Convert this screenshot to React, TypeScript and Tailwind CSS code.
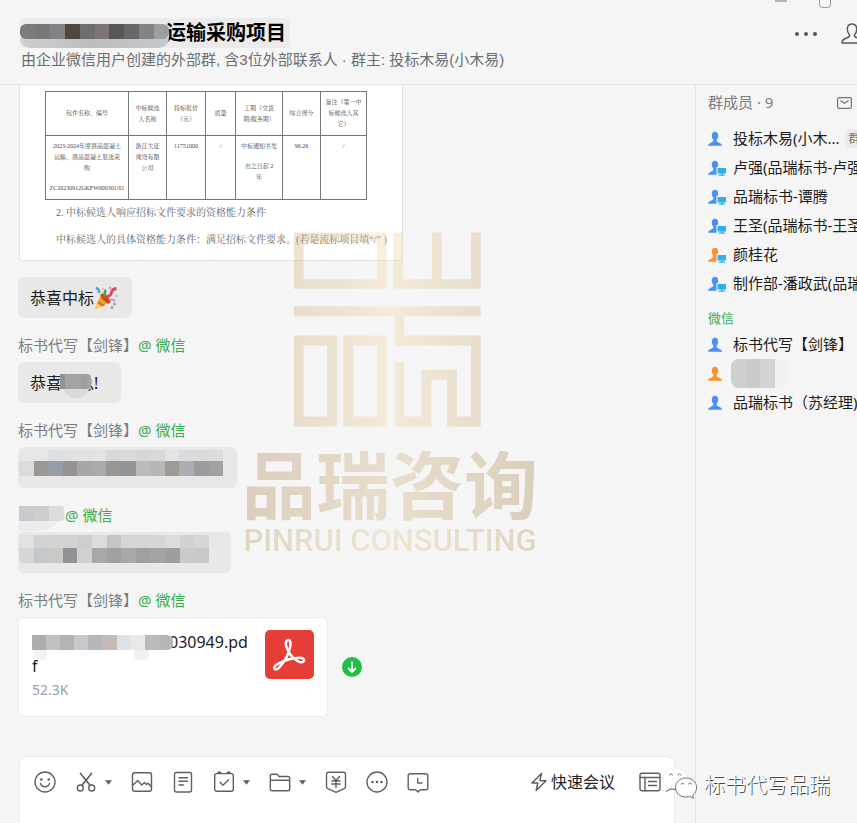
import React from "react";

const sans =
  "font-['Noto_Sans','Noto_Sans_CJK_SC',sans-serif]";

/* Rows of pixelated tiles that hide private details. */
function Mosaic({ cells, className }: { cells: string[]; className: string }) {
  return (
    <div aria-hidden="true" className={`flex overflow-hidden ${className}`}>
      {cells.map((c, i) => (
        <div key={i} className={`min-w-0 flex-1 ${c}`} />
      ))}
    </div>
  );
}

function Sender() {
  return (
    <div className="mt-[15px] mb-[5px] flex h-6 items-center text-[15px] whitespace-nowrap text-[#7a7d82]">
      <span>标书代写【剑锋】</span>
      <Wechat />
    </div>
  );
}

function Wechat() {
  return <span className="text-[15px] text-[#35ad50]">@ 微信</span>;
}

function Popper() {
  return (
    <svg viewBox="0 0 24 24" className="h-6 w-6 shrink-0" aria-label="庆祝" role="img">
      <path d="M1 23 7 8.500q5 2 8 8.500Z" fill="#f6a821" />
      <path d="M1 23 4 16l5 4Z" fill="#fbc846" />
      <path d="M4.500 15 11 19.500 8 20.500 3.600 17Z" fill="#dc6a2a" />
      <ellipse cx="11.500" cy="12.500" rx="2.800" ry="6.500" transform="rotate(-45 11.500 12.500)" fill="#c4501f" />
      <path d="M12 11q5-1 5.500-4.500t5-4" fill="none" stroke="#d84859" strokeWidth="2.800" />
      <path d="M11 10q-1-4 1-6" fill="none" stroke="#41a857" strokeWidth="2.600" />
      <path d="M2 2q4 1 3 5" fill="none" stroke="#4b9fd8" strokeWidth="2.400" />
      <path d="M15 14q4-1 6 1" fill="none" stroke="#e77fb0" strokeWidth="1.800" />
      <circle cx="20.500" cy="18" r="1.500" fill="#66b9e6" />
      <circle cx="16" cy="2" r="1.300" fill="#e48cc2" />
      <circle cx="9" cy="3" r="1" fill="#f3b13d" />
      <circle cx="18" cy="21.500" r="1.200" fill="#e8647c" />
      <circle cx="22.500" cy="10" r="1.200" fill="#8dc9ec" />
    </svg>
  );
}

function Person({ orange, desktop }: { orange?: boolean; desktop?: boolean }) {
  return (
    <svg viewBox="0 0 20 16" className="h-4 w-5 shrink-0" aria-hidden="true">
      <path
        d="M7 .8C4.900.8 3.800 2.300 3.800 4.500c0 1.700.6 2.900 1.400 4 .4.700.3 1.600-.5 2.200L1.500 12.400C.4 13 0 13.600 0 14.800h14c0-1.200-.4-1.800-1.500-2.400L9.300 10.700c-.8-.6-.9-1.500-.5-2.200.8-1.100 1.400-2.300 1.400-4C10.200 2.300 9.100.8 7 .8Z"
        fill={orange ? "#fb922e" : "#4a91f4"}
      />
      {desktop && (
        <g>
          <path d="M8.500 7H20v9H8.500Z" fill="#f5f5f5" />
          <path d="M9.500 8h8.500v5.400H9.500ZM13 13.400h1.600V14.600H17V15.700H10.700V14.600H13Z" fill="#2db1ea" />
        </g>
      )}
    </svg>
  );
}

function Member({
  name,
  orange,
  desktop,
  tag,
}: {
  name: React.ReactNode;
  orange?: boolean;
  desktop?: boolean;
  tag?: string;
}) {
  return (
    <li className="flex h-[29px] items-center gap-[5px] text-[15px] whitespace-nowrap text-[#1c1c1c]">
      <Person orange={orange} desktop={desktop} />
      <span>{name}</span>
      {tag && <span className="rounded-sm bg-[#ebebec] px-1 text-[12px] leading-[19px] text-[#777]">{tag}</span>}
    </li>
  );
}

function Tool({ label, caret, children }: { label: string; caret?: boolean; children: React.ReactNode }) {
  return (
    <button type="button" aria-label={label} className="flex shrink-0 items-center gap-2 text-[#5c6067]">
      <svg
        viewBox="0 0 22 22"
        className="h-[22px] w-[22px]"
        fill="none"
        stroke="currentColor"
        strokeWidth="1.400"
        strokeLinecap="round"
        strokeLinejoin="round"
      >
        {children}
      </svg>
      {caret && (
        <svg viewBox="0 0 7 5" className="h-[5px] w-[7px]" fill="currentColor">
          <path d="M0 .3h7L3.500 4.800Z" />
        </svg>
      )}
    </button>
  );
}

function Toolbar() {
  return (
    <div className="flex items-center justify-between pt-[14px] pr-[13px] pl-[14px]">
      <div className="flex items-center gap-[19px]">
        <Tool label="表情">
          <circle cx="11" cy="11" r="10" />
          <circle cx="7.300" cy="8.500" r=".6" fill="currentColor" />
          <circle cx="14.700" cy="8.500" r=".6" fill="currentColor" />
          <path d="M6.500 12.500q1 3.200 4.500 3.200t4.500-3.200" />
        </Tool>
        <Tool label="截图" caret>
          <path d="M5.500 2.500 15 14.300M16.500 2.500 7 14.300" strokeWidth="1.700" />
          <circle cx="5.300" cy="17" r="3" />
          <circle cx="16.700" cy="17" r="3" />
        </Tool>
        <Tool label="图片">
          <rect x="1.500" y="1.700" width="19" height="18.600" rx="2.200" />
          <path d="m1.500 14.500 5.200-5 4 4.500 2.800-2.500 2 2 1.500-1.300 3.500 3.600" />
        </Tool>
        <Tool label="文档">
          <rect x="2.500" y="1.500" width="17" height="19.500" rx="2" />
          <path d="M7 6.800h8.500M7 10.300h8.500M7 14h4.500" />
        </Tool>
        <Tool label="日程" caret>
          <rect x="1.700" y="2.600" width="18.600" height="17.700" rx="2" />
          <path d="M5.300 1.600h2.200M14.500 1.600h2.200" strokeWidth="2" />
          <path d="m7 11.300 3 3 5.500-5.500" />
        </Tool>
        <Tool label="文件" caret>
          <path d="M1.300 5q0-1.800 1.800-1.800h4.500q.7 0 1.200.7l1.300 1.600h8.800q1.800 0 1.800 1.800V18q0 1.800-1.800 1.800H3.100q-1.800 0-1.800-1.800ZM1.300 9.200h19.400" />
        </Tool>
        <Tool label="红包">
          <path d="M1.500 3.200q0-1.900 1.900-1.900h15.200q1.900 0 1.900 1.900v12.500q0 1.200-1.300 1.900L11 21.300l-8.200-3.700q-1.300-.7-1.300-1.900Z" />
          <path d="m7.500 5.500 3.500 4.300 3.500-4.300M6.800 10h8.400M6.800 13h8.400M11 10v6.500" />
        </Tool>
        <Tool label="更多">
          <circle cx="11" cy="11" r="10" />
          <circle cx="6.500" cy="11" r=".6" fill="currentColor" />
          <circle cx="11" cy="11" r=".6" fill="currentColor" />
          <circle cx="15.500" cy="11" r=".6" fill="currentColor" />
        </Tool>
        <Tool label="聊天记录">
          <path d="M3.200 2.700h15.600q2 0 2 2v12q0 2-2 2h-5.300L11 20.900l-2.500-2.200H3.200q-2 0-2-2v-12q0-2 2-2Z" />
          <path d="M10.700 7.500V12h4.200" />
        </Tool>
      </div>
      <div className="flex items-center gap-6">
        <button type="button" className="flex items-center gap-1 text-[16px] leading-[22px] whitespace-nowrap text-[#222]">
          <svg viewBox="0 0 16 20" className="h-5 w-4" fill="none" stroke="#5c6067" strokeWidth="1.500" strokeLinejoin="round">
            <path d="M10.500 1.500 1 11h5.800L5.200 18.500 15 8.700H9Z" />
          </svg>
          <span>快速会议</span>
        </button>
        <Tool label="侧边栏">
          <rect x="1" y="2.200" width="20" height="17.600" rx="2" />
          <path d="M1 6.500h20M6 6.500v13M9.500 10.500h8M9.500 14.500h8" />
        </Tool>
      </div>
    </div>
  );
}

const th = "border border-[#777] p-px text-center font-normal leading-[11px]";
const td = "border border-[#777] px-px pt-[5px] text-center align-top leading-[11px]";

function DocumentPreview() {
  return (
    <div className="w-[384px] rounded-b border border-t-0 border-[#e2e2e2] bg-white pt-[6px] pb-[11px] font-['Liberation_Serif','Noto_Serif_CJK_SC','Noto_Sans_CJK_SC',serif] text-[#666]">
      <table className="ml-[25px] w-[321px] table-fixed border-collapse text-[6px] text-[#444]">
        <colgroup>
          <col className="w-[83px]" />
          <col className="w-[38px]" />
          <col className="w-[39px]" />
          <col className="w-[30px]" />
          <col className="w-[47px]" />
          <col className="w-[38px]" />
          <col className="w-[46px]" />
        </colgroup>
        <thead>
          <tr className="h-11">
            <th className={th}>包件名称、编号</th>
            <th className={th}>中标候选<br />人名称</th>
            <th className={th}>投标报价<br />（元）</th>
            <th className={th}>质量</th>
            <th className={th}>工期（交货<br />期/服务期）</th>
            <th className={th}>综合得分</th>
            <th className={th}>备注（第一中<br />标候选人其<br />它）</th>
          </tr>
        </thead>
        <tbody>
          <tr className="h-16">
            <td className={td}>
              2023-2024年度商品混凝土<br />运输、商品混凝土泵送采<br />购
              <div className="pt-[9px]">ZC20230912GKFW000301/01</div>
            </td>
            <td className={td}>浙江大征<br />建设有限<br />公司</td>
            <td className={td}>11751000</td>
            <td className={td}>/</td>
            <td className={td}>
              中标通知书发
              <div className="pt-[9px]">出之日起 2<br />年</div>
            </td>
            <td className={td}>96.26</td>
            <td className={td}>/</td>
          </tr>
        </tbody>
      </table>
      <p className="mt-1 ml-[36px] text-[10px] leading-[18px] whitespace-nowrap">
        2. 中标候选人响应招标文件要求的资格能力条件
      </p>
      <p className="mt-[9px] ml-[36px] text-[10px] leading-[18px] whitespace-nowrap">
        中标候选人的具体资格能力条件：满足招标文件要求。(若是流标项目填“/” )
      </p>
    </div>
  );
}

/* Translucent company brand laid over the conversation. */
function BrandOverlay() {
  return (
    <div className="pointer-events-none absolute top-[147px] left-[243px] flex w-[294px] flex-col items-center opacity-40">
      <svg viewBox="192 38 561 582" className="ml-[51px] h-[195px] w-[187px] self-start" aria-hidden="true">
        <defs>
          <linearGradient id="gold" gradientUnits="userSpaceOnUse" x1="192" x2="753" y1="0" y2="0">
            <stop offset="0" stopColor="#d7b88c" />
            <stop offset=".5" stopColor="#f2dbb0" />
            <stop offset=".75" stopColor="#e2cb9f" />
            <stop offset="1" stopColor="#d7b88c" />
          </linearGradient>
        </defs>
        <path
          fill="url(#gold)"
          fillRule="evenodd"
          d="M192 38H470V207H192ZM221 67V178H441V67ZM490 38H519V178H606V38H635V178H723V38H752V207H490ZM192 259H752V289H523V347H752V620H651V480H604V620H494V426H523V590H574V450H681V590H723V377H494V289H192ZM192 347H321V620H192ZM221 377V590H291V377ZM340 347H470V620H340ZM371 377V590H441V377Z"
        />
      </svg>
      <div className="mt-6 bg-linear-to-r from-[#b39468] via-[#d8bd90] to-[#b39468] bg-clip-text font-['Roboto','Noto_Sans_CJK_SC',sans-serif] text-[74px] leading-[73px] font-bold whitespace-nowrap text-transparent">
        品瑞咨询
      </div>
      <div className="bg-linear-to-r from-[#c4a377] via-[#e8cf9f] to-[#c4a377] bg-clip-text font-['Roboto',sans-serif] text-[31px] leading-[34px] font-medium whitespace-nowrap text-transparent">
        PINRUI CONSULTING
      </div>
    </div>
  );
}

function FileCard() {
  return (
    <div className="flex items-center">
      <div className="flex h-[100px] w-[310px] justify-between rounded-md border border-[#ebebeb] bg-white px-[13px] pt-[12px]">
        <div className="text-[16px] leading-[23px] text-[#1c1c1c]">
          <div className="flex h-[25px] items-center">
            <div className="relative z-10 -mr-[4px] h-[15px]">
              <Mosaic
                className="h-[15px] w-[141px] rounded-r-md"
                cells={["bg-[#b0acab]", "bg-[#bdc1c5]", "bg-[#b6b2b0]", "bg-[#c5c9cc]", "bg-[#b5b7ba]", "bg-[#c5bab5]", "bg-[#dce2e9]", "bg-[#e9e9e9]", "bg-[#bcbab8]", "bg-[#b8b6b5]"]}
              />
              <div className="absolute top-[15px] left-0 h-[10px] w-[15px] rounded-bl-full bg-[#f3f3f3]" />
              <div className="absolute top-[15px] left-[102px] h-[10px] w-[15px] rounded-b-sm bg-[#f1f1ef]" />
            </div>
            <span>030949.pd</span>
          </div>
          <div>f</div>
          <div className="text-[14px] text-[#95a0ab]">52.3K</div>
        </div>
        <svg viewBox="0 0 49 49" className="h-[49px] w-[49px] shrink-0" role="img" aria-label="PDF">
          <rect width="49" height="49" rx="5" fill="#e63e36" />
          <path
            d="M23.300 10c-2.600.300-3 3.600-1.900 6.800 1.800 5.200 5.400 10.800 11.300 14.300 2.800 1.600 5.700 1.500 6.300-.300.700-2.100-1.700-3.100-4.400-3-8 .200-14.400 2.400-20.800 5.600-3 1.500-5 3.300-4.300 5.200.6 1.600 3 .900 4.800-1.100 5.700-6.400 9.700-13.500 11-21.200.400-2.700.3-6.500-2-6.300Z"
            fill="none"
            stroke="#fff"
            strokeWidth="2.500"
            strokeLinejoin="round"
          />
        </svg>
      </div>
      <button type="button" aria-label="下载" className="ml-[14px] flex h-5 w-5 items-center justify-center rounded-full bg-[#20bf45]">
        <svg viewBox="0 0 14 14" className="h-[14px] w-[14px]" fill="none" stroke="#fff" strokeWidth="1.800">
          <path d="M7 1.500v10.500M3 8l4 4 4-4" />
        </svg>
      </button>
    </div>
  );
}

const bubble = "relative flex h-[41px] items-center overflow-hidden rounded-md bg-[#e8e8e8] text-[16px] text-[#1c1c1c] whitespace-nowrap";

function Chat() {
  return (
    <main className="relative flex min-w-0 flex-1 flex-col border-r border-[#e4e4e4]">
      <div className="min-h-0 flex-1 overflow-hidden pl-[18px]">
        <div className="pl-px">
          <DocumentPreview />
        </div>
        <div className={`${bubble} mt-4 w-[114px] pl-3`}>
          <span>恭喜中标</span>
          <Popper />
        </div>

        <Sender />
        <div className={`${bubble} w-[103px] pl-3`}>
          <span>恭喜</span>
          <span className="ml-4">总!</span>
          <div className="absolute top-[18px] left-[45px] h-[18px] w-[27px] rounded-b-full bg-[#d9dadb]" />
          <Mosaic className="absolute top-3 left-[42px] h-[15px] w-[31px] rounded-r" cells={["bg-[#929292]", "bg-[#a3a3a3]", "bg-[#a3a3a3]", "bg-[#a3a3a3]", "bg-[#9f9f9f]", "bg-[#a3a3a3]"]} />
        </div>

        <Sender />
        <div className={`${bubble} w-[219px] flex-col items-start pl-px`}>
          <Mosaic className="mt-[3px] h-[11px] w-[204px]" cells={["bg-[#e6e6e6]", "bg-[#e6e6e6]", "bg-[#dedfe1]", "bg-[#e1e1e1]", "bg-[#e1e1e1]", "bg-[#e3e3e3]", "bg-[#d8d8d8]", "bg-[#dadada]", "bg-[#d6d6d6]", "bg-[#d8d8d8]", "bg-[#e3e3e3]", "bg-[#dadbde]", "bg-[#dbdbdb]", "bg-[#dcdcdc]"]} />
          <Mosaic className="h-[15px] w-[204px]" cells={["bg-[#dcdbd9]", "bg-[#9e9791]", "bg-[#989ea6]", "bg-[#979394]", "bg-[#a5a8a7]", "bg-[#abaaa8]", "bg-[#999693]", "bg-[#919699]", "bg-[#bbbbbb]", "bg-[#b7b7b7]", "bg-[#9f9995]", "bg-[#aaaeb3]", "bg-[#9b9ba0]", "bg-[#a3a19f]"]} />
        </div>

        <div className="mt-[15px] mb-[5px] flex h-6 items-center gap-px pl-px">
          <div className="relative h-[18px] w-[45px]">
            <div className="absolute top-0 left-0 h-[25px] w-[45px] rounded-br-full bg-[#ececed]" />
            <Mosaic className="relative h-[15px] w-[45px] rounded-r" cells={["bg-[#c8cad0]", "bg-[#cccdce]", "bg-[#dadbdd]"]} />
          </div>
          <Wechat />
        </div>
        <div className={`${bubble} w-[213px] flex-col items-start pl-px`}>
          <Mosaic className="mt-[3px] h-[13px] w-[190px]" cells={["bg-[#e2e2e2]", "bg-[#d2d2d2]", "bg-[#d3d3d3]", "bg-[#d3d3d4]", "bg-[#cecece]", "bg-[#dbdbdc]", "bg-[#c5c5c3]", "bg-[#d4d5d7]", "bg-[#d5d5d5]", "bg-[#d5d6d8]", "bg-[#dcdcdc]", "bg-[#d1d1d1]", "bg-[#d5d6d8]"]} />
          <Mosaic className="h-[15px] w-[190px] rounded-bl" cells={["bg-[#d9d5d6]", "bg-[#c3c8ca]", "bg-[#cac9c5]", "bg-[#919296]", "bg-[#d0d0d0]", "bg-[#aaa8a6]", "bg-[#a0a0a0]", "bg-[#a8a8a9]", "bg-[#a0a0a1]", "bg-[#a4a4a3]", "bg-[#9d9ea0]", "bg-[#c9cbca]", "bg-[#c8c8c9]"]} />
        </div>

        <Sender />
        <FileCard />
      </div>

      <div className="mr-5 ml-[19px] h-[67px] shrink-0 rounded-t-lg border border-b-0 border-[#ebebeb] bg-white">
        <Toolbar />
      </div>
      <BrandOverlay />
    </main>
  );
}

function Members() {
  return (
    <aside className="w-[161px] shrink-0 overflow-hidden pl-3">
      <div className="mb-1 flex h-[35px] items-center justify-between pr-[5px]">
        <h2 className="text-[15px] whitespace-nowrap text-[#7a7d82]">群成员 · 9</h2>
        <button type="button" aria-label="邀请">
          <svg viewBox="0 0 15 12" className="h-3 w-[15px]" fill="none" stroke="#70747a" strokeWidth="1.200">
            <rect x=".6" y=".6" width="13.800" height="10.800" rx="1.500" />
            <path d="m3.500 3.500 4 2.800 4-2.800" />
          </svg>
        </button>
      </div>
      <ul>
        <Member name="投标木易(小木..." tag="群主" />
        <Member name="卢强(品瑞标书-卢强)" desktop />
        <Member name="品瑞标书-谭腾" desktop />
        <Member name="王圣(品瑞标书-王圣)" desktop />
        <Member name="颜桂花" orange desktop />
        <Member name="制作部-潘政武(品瑞" desktop />
      </ul>
      <h3 className="h-8 pt-[9px] text-[13px] leading-[22px] text-[#35ad50]">微信</h3>
      <ul>
        <Member name="标书代写【剑锋】" />
        <Member
          orange
          name={
            <Mosaic
              className="-ml-[2px] h-[29px] w-[58px] rounded-lg"
              cells={["bg-[#cfcfd0]", "bg-[#cacacb]", "bg-[#d1d3d4]", "bg-[#f1f1f2]"]}
            />
          }
        />
        <Member name="品瑞标书（苏经理)1" />
      </ul>
    </aside>
  );
}

function Header() {
  return (
    <header className="flex h-[85px] shrink-0 justify-between overflow-hidden border-b border-[#e4e4e4]">
      <div className="pt-[18px] pl-5">
        <h1 className="flex h-[30px] w-fit items-center rounded-sm bg-[#ebebec] pr-1 text-[20px] font-bold whitespace-nowrap text-black">
          <div className="relative z-10 -mr-[3px] h-full w-[149px]">
            <div className="absolute top-5 left-0 h-[10px] w-full rounded-b-full bg-linear-to-r from-[#cfcfcf] via-[#bdbdbd] to-[#c6c8cb]" />
            <Mosaic
              className="absolute top-[6px] left-0 h-[15px] w-full rounded-l-md rounded-r-md"
              cells={["bg-[#7d7b77]", "bg-[#7a7875]", "bg-[#7f8286]", "bg-[#4e4742]", "bg-[#6b6e70]", "bg-[#7b7673]", "bg-[#575757]", "bg-[#66676b]", "bg-[#808487]", "bg-[#9b9d9f]"]}
            />
          </div>
          <span>运输采购项目</span>
        </h1>
        <p className="pl-px font-['Liberation_Sans','Noto_Sans_CJK_SC',sans-serif] text-[15px] leading-6 whitespace-nowrap text-[#6b6e73]">
          由企业微信用户创建的外部群, 含3位外部联系人 · 群主: 投标木易(小木易)
        </p>
      </div>
      <div className="flex flex-col items-end">
        <div className="flex gap-8 pr-[26px]">
          <button type="button" aria-label="最小化" className="h-[2px] w-3 bg-[#b5b5b5]" />
          <button type="button" aria-label="最大化" className="h-2 w-3 rounded-b-sm border border-t-0 border-[#a0a0a0]" />
        </div>
        <div className="mt-[15px] -mr-[6px] flex items-center gap-6">
          <button type="button" aria-label="更多" className="flex gap-[5px]">
            <i className="h-1 w-1 rounded-full bg-[#55585e]" />
            <i className="h-1 w-1 rounded-full bg-[#55585e]" />
            <i className="h-1 w-1 rounded-full bg-[#55585e]" />
          </button>
          <button type="button" aria-label="添加成员">
            <svg viewBox="0 0 22 21" className="h-[21px] w-[22px]" fill="none" stroke="#55585e" strokeWidth="1.400" strokeLinejoin="round">
              <path d="M11 1C8 1 6.300 3.300 6.300 6.300c0 2.300.9 4 2 5.400.6.800.4 1.800-.6 2.300l-4.200 2C2 16.700 1 18 1 20h20c0-2-1-3.300-2.500-4l-4.200-2c-1-.5-1.200-1.500-.6-2.300 1.100-1.400 2-3.100 2-5.400C15.700 3.300 14 1 11 1Z" />
            </svg>
          </button>
        </div>
      </div>
    </header>
  );
}

function AccountOverlay() {
  return (
    <div className="pointer-events-none absolute right-[27px] bottom-6 flex items-center gap-[6px]">
      <svg viewBox="0 0 36 32" className="h-8 w-9" aria-hidden="true">
        <path d="M13 1C6 1 .5 5.500.5 11.500c0 3.500 2 6.500 5 8.300L4.500 24l4.500-2.500q2 .6 4 .6c7 0 12.500-4.600 12.500-10.600S20 1 13 1Z" fill="#fff" stroke="#ddd" strokeWidth=".5" />
        <path d="m3.800 24.500 5.200-2.600q2.500.6 5 .5" fill="none" stroke="#555" strokeWidth="1" />
        <path d="M24 11c-6 0-10.500 4-10.500 9.500S18 30 24 30q2 0 3.800-.6l3.700 2-.9-3.300c2.500-1.700 4-4.500 4-7.600C34.600 15 30 11 24 11Z" fill="#fff" stroke="#555" strokeWidth=".8" />
        <g fill="#fff" stroke="#666" strokeWidth=".9">
          <path d="M7.500 8.500a1.500 1.500 0 0 1 3 0M16 8.500a1.500 1.500 0 0 1 3 0M19 17.500a1.400 1.400 0 0 1 2.800 0M26.500 17.500a1.400 1.400 0 0 1 2.800 0" />
        </g>
      </svg>
      <span className="font-['Noto_Sans_CJK_SC',sans-serif] text-[21px] leading-8 font-light whitespace-nowrap text-white [text-shadow:1px_1px_0_#444]">
        标书代写品瑞
      </span>
    </div>
  );
}

export default function App() {
  return (
    <div className={`relative flex h-screen flex-col overflow-hidden bg-[#f5f5f5] ${sans}`}>
      <Header />
      <div className="flex min-h-0 flex-1">
        <Chat />
        <Members />
      </div>
      <AccountOverlay />
    </div>
  );
}
